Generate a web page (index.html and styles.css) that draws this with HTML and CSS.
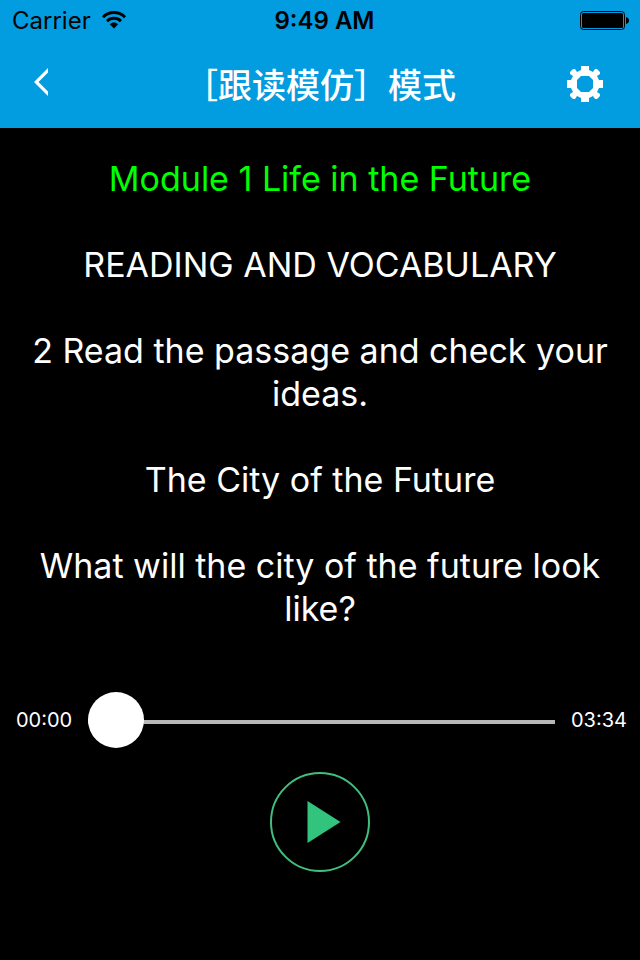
FILE: index.html
```html
<!DOCTYPE html>
<html lang="zh-CN">
<head>
<meta charset="utf-8">
<meta name="viewport" content="width=device-width, initial-scale=1">
<title>［跟读模仿］模式</title>
<link rel="stylesheet" href="styles.css">
</head>
<body>
<header class="header">
  <div class="status">
    <div class="carrier">
      <span>Carrier</span>
      <svg class="wifi" width="26" height="20" viewBox="0 0 26 20" aria-hidden="true">
        <path d="M2 7.2C8.2 1 17.8 1 24 7.2" fill="none" stroke="currentColor" stroke-width="3"/>
        <path d="M6 11.2C10 7.4 16 7.4 20 11.2" fill="none" stroke="currentColor" stroke-width="3"/>
        <path d="M8.8 14.2C11.2 12 14.8 12 17.2 14.2L13 18.6Z" fill="currentColor"/>
      </svg>
    </div>
    <time class="clock">9:49 AM</time>
    <svg class="battery" width="49" height="19" viewBox="0 0 49 19" aria-hidden="true">
      <rect x=".5" y=".5" width="44" height="18" rx="3" fill="none" stroke="currentColor"/>
      <rect x="2" y="2" width="41" height="15" rx="1.5" fill="currentColor"/>
      <path d="M46 6Q49 7 49 9.500T46 13Z" fill="currentColor"/>
    </svg>
  </div>
  <nav class="navbar">
    <button class="icon-button back" type="button" aria-label="返回">
      <svg width="16" height="28" viewBox="0 0 16 28" aria-hidden="true">
        <path d="M15 0V4.500L5.500 14 15 23.500V28L1 14Z" fill="currentColor"/>
      </svg>
    </button>
    <h1 class="title">［跟读模仿］模式</h1>
    <button class="icon-button" type="button" aria-label="设置">
      <svg width="36" height="36" viewBox="0 0 36 36" aria-hidden="true">
        <path fill="currentColor" fill-rule="evenodd" d="M14 0H22V4L26 6 28 3H30L33 6V8L30 10 32 14H36V22H32L30 26 33 28V30L30 33H28L26 30 22 32V36H14V32L10 30 8 33H6L3 30V28L6 26 4 22H0V14H4L6 10 3 8V6L6 3H8L10 6 14 4ZM14 10L10 14V22L14 26H22L26 22V14L22 10Z"/>
      </svg>
    </button>
  </nav>
</header>
<main>
  <section class="passage">
    <p class="line current">Module 1 Life in the Future</p>
    <p class="line">READING AND VOCABULARY</p>
    <p class="line">2 Read the passage and check your ideas.</p>
    <p class="line">The City of the Future</p>
    <p class="line">What will the city of the future look like?</p>
  </section>
  <section class="player">
    <div class="progress">
      <label class="time" for="seek">00:00</label>
      <input class="seek" id="seek" type="range" min="0" max="214" value="0">
      <span class="time">03:34</span>
    </div>
    <button class="play" type="button" aria-label="播放">
      <svg width="100" height="100" viewBox="0 0 100 100" aria-hidden="true">
        <circle cx="50" cy="50" r="49" fill="none" stroke="#3fbf7f" stroke-width="2"/>
        <path d="M37.500 29V71L70.500 50Z" fill="#32c47c"/>
      </svg>
    </button>
  </section>
</main>
</body>
</html>
```
FILE: styles.css
```css
* {
  box-sizing: border-box;
}

body {
  margin: 0;
  min-height: 100vh;
  background: #000;
  color: #fff;
  font-family: Inter, "Noto Sans CJK SC", sans-serif;
}

button {
  padding: 0;
  border: 0;
  background: none;
  color: inherit;
}

svg {
  display: block;
}

.header {
  background: #029ce0;
}

.status {
  display: grid;
  grid-template-columns: 1fr auto 1fr;
  align-items: center;
  height: 40px;
  padding: 0 11px 0 12px;
  color: #000;
  font-size: 24px;
}

.carrier {
  display: flex;
  align-items: center;
  gap: 10px;
}

.clock {
  padding-left: 8px;
  font-weight: 600;
}

.battery {
  justify-self: end;
}

.navbar {
  display: grid;
  grid-template-columns: 76px 1fr 76px;
  align-items: center;
  height: 88px;
  padding: 0 17px;
}

.icon-button {
  display: grid;
  place-items: center;
  height: 48px;
}

.back {
  width: 48px;
  padding-bottom: 4px;
}

.title {
  margin: 0;
  font-family: "Noto Sans CJK SC", sans-serif;
  font-size: 34px;
  font-weight: 500;
  line-height: 48px;
  text-align: center;
  white-space: nowrap;
}

.passage {
  display: flex;
  flex-direction: column;
  gap: 43px;
  padding: 29px 20px 62px;
  font-size: 34px;
  line-height: 43px;
  text-align: center;
}

.line {
  margin: 0;
}

.current {
  color: #00ff00;
}

.player {
  display: flex;
  flex-direction: column;
  align-items: center;
  gap: 24px;
  padding-bottom: 88px;
}

.progress {
  display: flex;
  align-items: center;
  align-self: stretch;
  gap: 16px;
  padding: 0 13px 0 16px;
}

.time {
  font-size: 20px;
  line-height: 28px;
}

.seek {
  flex: 1;
  min-width: 0;
  height: 56px;
  margin: 0;
  appearance: none;
  background: none;
}

.seek::-webkit-slider-runnable-track {
  height: 56px;
  background: linear-gradient(#b7b7b7, #b7b7b7) 0 28px / 100% 4px no-repeat;
}

.seek::-webkit-slider-thumb {
  appearance: none;
  width: 56px;
  height: 56px;
  border-radius: 50%;
  background: #fff;
}
```
